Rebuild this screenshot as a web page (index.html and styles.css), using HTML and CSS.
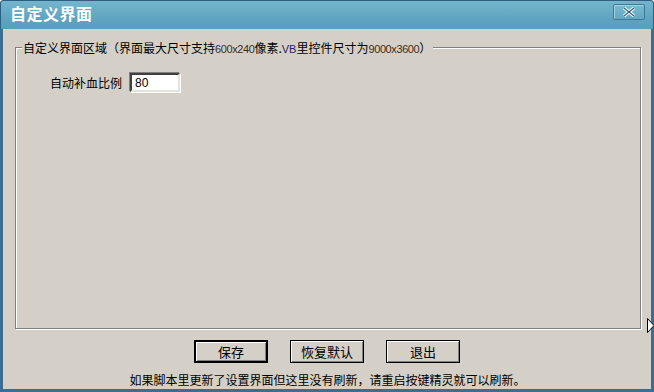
FILE: index.html
```html
<!DOCTYPE html>
<html>
<head>
<meta charset="utf-8">
<link rel="stylesheet" href="styles.css">
</head>
<body>
<div class="window">
  <div class="titlebar">
    <span class="title">自定义界面</span>
    <button class="close"><svg width="14" height="10" viewBox="0 0 14 10"><path d="M2 1 L12 9 M12 1 L2 9" stroke="#fff" stroke-width="3.2"/><path d="M2 1 L12 9 M12 1 L2 9" stroke="#2c5d78" stroke-width="1.2"/></svg></button>
  </div>
  <div class="client">
    <div class="group">
      <span class="legend">自定义界面区域（界面最大尺寸支持<span class="num">600x240</span>像素.<span class="vb">VB</span>里控件尺寸为<span class="num">9000x3600</span>）</span>
      <div class="row">
        <label class="lbl">自动补血比例</label>
        <input class="edit" type="text" value="80">
      </div>
    </div>
    <div class="buttons">
      <button class="btn default">保存</button>
      <button class="btn">恢复默认</button>
      <button class="btn">退出</button>
    </div>
    <div class="note">如果脚本里更新了设置界面但这里没有刷新，请重启按键精灵就可以刷新。</div>
    <svg class="cursor" width="8" height="16" viewBox="0 0 8 16"><path d="M0.5 0.5 L7 7.5 L0.5 14.5 Z" fill="#fff" stroke="#000" stroke-width="1"/></svg>
  </div>
</div>
</body>
</html>
```
FILE: styles.css
```css
html, body {
  margin: 0;
  padding: 0;
  background: #ffffff;
}
body {
  width: 654px;
  height: 392px;
  overflow: hidden;
  font-family: "Noto Sans CJK SC", "Liberation Sans", sans-serif;
}
.window {
  width: 654px;
  height: 392px;
  box-sizing: border-box;
  display: flex;
  flex-direction: column;
  background: #3b6e92;
  border-radius: 4px 4px 0 0;
  overflow: hidden;
}
.titlebar {
  height: 29px;
  flex: none;
  display: flex;
  align-items: center;
  justify-content: space-between;
  padding: 0 9px 0 10px;
  background: linear-gradient(#74b6cd, #5ea3bf 70%, #5a9dba);
  box-shadow: inset 1px 0 0 #2f5f80, inset -1px 0 0 #2f5f80, inset 0 1px 0 #2f5f80;
  border-radius: 4px 4px 0 0;
}
.title {
  color: #fff;
  font-size: 16px;
  font-weight: bold;
  line-height: 20px;
  margin-top: -4px;
  letter-spacing: 0.5px;
}
.close {
  width: 32px;
  height: 16px;
  margin-top: -6px;
  padding: 0;
  display: flex;
  align-items: center;
  justify-content: center;
  background: linear-gradient(#77b9cf, #63a7c2);
  border: 1px solid #3f7896;
  border-radius: 2px;
  box-shadow: inset 1px 1px 0 #a5d3e3;
}
.client {
  flex: 1;
  position: relative;
  margin: 0 3px 3px 3px;
  background: #d4d0c8;
  display: flex;
  flex-direction: column;
  align-items: center;
  padding-top: 18px;
}
.group {
  position: relative;
  align-self: stretch;
  margin: 0 10px 0 12px;
  height: 280px;
  border: 1px solid #808080;
  box-shadow: inset 1px 1px 0 #ffffff, 1px 1px 0 #ffffff;
}
.legend {
  position: absolute;
  left: 6px;
  top: -8px;
  padding: 0 2px 0 1px;
  background: #d4d0c8;
  font-size: 12px;
  line-height: 15px;
  color: #000;
  white-space: nowrap;
}
.num {
  font-family: "Liberation Sans", sans-serif;
  font-size: 11px;
  color: #3e2c14;
  letter-spacing: -0.4px;
}
.vb {
  font-family: "Liberation Sans", sans-serif;
  font-size: 11px;
  color: #2a2060;
}
.row {
  display: flex;
  align-items: center;
  margin: 25px 0 0 34px;
  gap: 8px;
}
.lbl {
  font-size: 12px;
  line-height: 14px;
  color: #000;
}
.edit {
  box-sizing: border-box;
  width: 50px;
  height: 19px;
  margin: 0;
  padding: 0 0 0 3px;
  background: #fff;
  border-style: solid;
  border-width: 2px;
  border-color: #404040 #e4e2dc #e4e2dc #404040;
  box-shadow: -1px -1px 0 #808080, 1px 1px 0 #ffffff;
  font-family: "Liberation Sans", sans-serif;
  font-size: 12px;
  color: #000;
  outline: none;
}
.buttons {
  display: flex;
  gap: 22px;
  margin-top: 11px;
  margin-left: 0;
}
.btn {
  box-sizing: border-box;
  width: 74px;
  height: 23px;
  padding: 0;
  margin: 0;
  background: #d4d0c8;
  border: 1px solid #000;
  box-shadow: inset 1px 1px 0 #ffffff, inset -1px -1px 0 #808080;
  font-family: "Noto Sans CJK SC", sans-serif;
  font-size: 13px;
  line-height: 20px;
  color: #000;
}
.btn.default {
  border: 2px solid #000;
}
.note {
  margin-top: 9px;
  margin-left: 1px;
  font-size: 12px;
  line-height: 16px;
  color: #000;
  white-space: nowrap;
}
.cursor {
  position: absolute;
  right: -4px;
  top: 289px;
}
```
